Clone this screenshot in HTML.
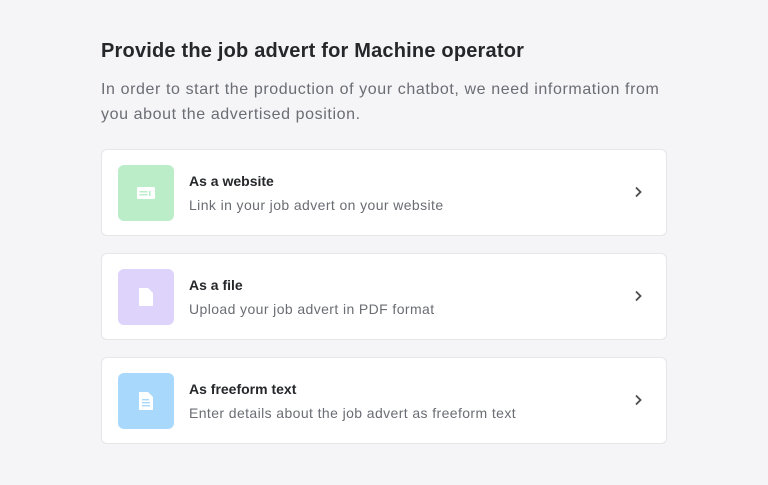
<!DOCTYPE html>
<html><head><style>
body{margin:0;width:768px;height:485px;background:#f5f5f7;font-family:"Liberation Sans",sans-serif;position:relative;overflow:hidden}
h1{position:absolute;left:101px;top:40px;margin:0;font-size:20px;font-weight:600;color:#26272b;letter-spacing:0.2px}
p.d{position:absolute;left:101px;top:77px;margin:0;width:570px;font-size:16px;line-height:25px;color:#6b6d74;letter-spacing:0.6px}
.c{position:absolute;left:101px;width:564px;height:85px;background:#fff;border:1px solid #e6e6ea;border-radius:6px}
.i{position:absolute;left:16px;top:15px;width:56px;height:56px;border-radius:6px}
.i svg{position:absolute;left:18px;top:18px}
.t{position:absolute;left:87px;top:23px;font-size:14px;font-weight:bold;color:#26272b}
.s{position:absolute;left:87px;top:47px;font-size:14px;color:#6b6d74;letter-spacing:0.4px}
.a{position:absolute;right:22px;top:36px}
</style></head><body>
<h1>Provide the job advert for Machine operator</h1>
<p class="d">In order to start the production of your chatbot, we need information from you about the advertised position.</p>
<div class="c" style="top:149px"><div class="i" style="background:#bbedc9"><svg width="20" height="20" viewBox="0 0 20 20"><rect x="1" y="4" width="18" height="12" rx="1.5" fill="#fff"/><rect x="3.5" y="8" width="8" height="1.5" fill="#bbedc9"/><rect x="3.5" y="11" width="8" height="1.5" fill="#bbedc9"/><rect x="13" y="8" width="1.5" height="5" fill="#bbedc9"/></svg></div><div class="t">As a website</div><div class="s">Link in your job advert on your website</div><svg class="a" width="12" height="12" viewBox="0 0 12 12"><path d="M4 1.5L8.5 6L4 10.5" stroke="#4a4b50" stroke-width="1.8" fill="none"/></svg></div>
<div class="c" style="top:253px"><div class="i" style="background:#ddd3fb"><svg width="20" height="20" viewBox="0 0 20 20"><path d="M3 1H12L17 6V19H3Z" fill="#fff"/></svg></div><div class="t">As a file</div><div class="s">Upload your job advert in PDF format</div><svg class="a" width="12" height="12" viewBox="0 0 12 12"><path d="M4 1.5L8.5 6L4 10.5" stroke="#4a4b50" stroke-width="1.8" fill="none"/></svg></div>
<div class="c" style="top:357px"><div class="i" style="background:#a8d8fb"><svg width="20" height="20" viewBox="0 0 20 20"><path d="M3 1H12L17 6V19H3Z" fill="#fff"/><rect x="6" y="8" width="7" height="1.4" fill="#a8d8fb"/><rect x="6" y="11" width="8" height="1.4" fill="#a8d8fb"/><rect x="6" y="14" width="8" height="1.4" fill="#a8d8fb"/></svg></div><div class="t">As freeform text</div><div class="s">Enter details about the job advert as freeform text</div><svg class="a" width="12" height="12" viewBox="0 0 12 12"><path d="M4 1.5L8.5 6L4 10.5" stroke="#4a4b50" stroke-width="1.8" fill="none"/></svg></div>
</body></html>
